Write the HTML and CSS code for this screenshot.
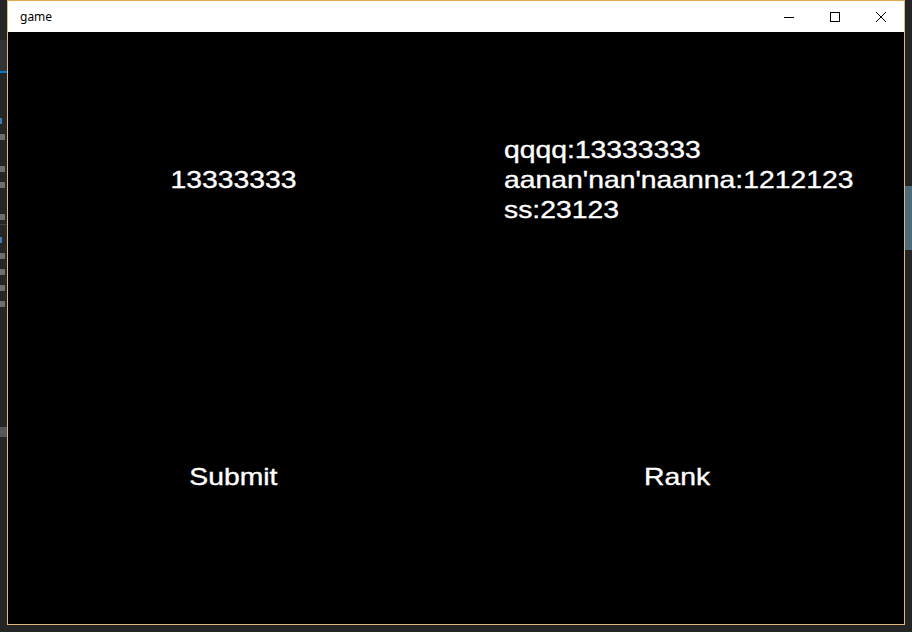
FILE: index.html
```html
<!DOCTYPE html>
<html>
<head>
<meta charset="utf-8">
<title>game</title>
<link rel="stylesheet" href="styles.css">
</head>
<body>
<div class="desktop">
  <div class="ide-left">
    <div class="tab"></div>
    <div class="mark blue"></div>
    <div class="mark grey gap"></div>
    <div class="mark grey"></div>
    <div class="mark grey gap"></div>
    <div class="mark grey"></div>
    <div class="rule"></div>
    <div class="mark blue"></div>
    <div class="mark grey"></div>
    <div class="mark grey"></div>
    <div class="mark grey"></div>
    <div class="mark grey"></div>
    <div class="sel"></div>
  </div>
  <div class="ide-right">
    <div class="panel"></div>
  </div>
  <div class="window">
    <div class="titlebar">
      <span class="title">game</span>
      <div class="controls">
        <div class="ctl">
          <svg width="10" height="10" viewBox="0 0 10 10"><path d="M0 5.5h10" stroke="#000" stroke-width="1"/></svg>
        </div>
        <div class="ctl">
          <svg width="10" height="10" viewBox="0 0 10 10"><rect x="0.5" y="0.5" width="9" height="9" fill="none" stroke="#000" stroke-width="1"/></svg>
        </div>
        <div class="ctl">
          <svg width="10" height="10" viewBox="0 0 10 10"><path d="M0 0L10 10M10 0L0 10" stroke="#000" stroke-width="1"/></svg>
        </div>
      </div>
    </div>
    <div class="content">
      <div class="cell score-cell"><span class="big">13333333</span></div>
      <div class="cell rank-cell">
        <div class="rank-list">
          <div class="big">qqqq:13333333</div>
          <div class="big">aanan'nan'naanna:1212123</div>
          <div class="big">ss:23123</div>
        </div>
      </div>
      <div class="cell btn-cell left-btn"><span class="big">Submit</span></div>
      <div class="cell btn-cell right-btn"><span class="big">Rank</span></div>
    </div>
  </div>
</div>
</body>
</html>
```

FILE: styles.css
```css
html, body {
  margin: 0;
  padding: 0;
}
body {
  width: 912px;
  height: 632px;
  overflow: hidden;
  background: #252526;
  font-family: "Liberation Sans", Arial, sans-serif;
}
.desktop {
  position: relative;
  width: 912px;
  height: 632px;
  overflow: hidden;
  background: #252526;
}
.ide-left {
  position: absolute;
  left: 0;
  top: 40px;
  width: 7px;
  display: flex;
  flex-direction: column;
}
.ide-left .tab {
  height: 31px;
  background: #333337;
  border-bottom: 2px solid #007acc;
  margin-bottom: 45px;
}
.ide-left .mark {
  height: 6px;
  margin-bottom: 10px;
}
.ide-left .gap {
  margin-bottom: 26px;
}
.ide-left .blue { background: #3d79b4; width: 2px; }
.ide-left .grey { background: #6e6e6e; width: 5px; }
.ide-left .rule {
  height: 1px;
  background: #3f3f46;
  margin: -6px 0 12px;
}
.ide-left .sel {
  margin-top: 110px;
  height: 10px;
  background: #55555a;
}
.ide-right {
  position: absolute;
  left: 905px;
  top: 186px;
  width: 7px;
}
.ide-right .panel {
  height: 64px;
  background: #4e6b7c;
}
.window {
  position: absolute;
  left: 7px;
  top: 0;
  width: 896px;
  height: 623px;
  border: 1px solid #e0b77c;
  border-top-color: #e3a84f;
  display: flex;
  flex-direction: column;
  background: #000;
}
.titlebar {
  height: 31px;
  flex: none;
  background: #fff;
  display: flex;
  align-items: center;
  justify-content: space-between;
}
.title {
  font-family: "Noto Sans", "Open Sans", sans-serif;
  font-size: 12px;
  color: #000;
  padding-left: 12px;
  margin-top: -1px;
}
.controls {
  display: flex;
  height: 31px;
}
.ctl {
  width: 46px;
  height: 31px;
  display: flex;
  align-items: center;
  justify-content: center;
}
.ctl svg {
  display: block;
  shape-rendering: crispEdges;
}
.content {
  flex: 1;
  background: #000;
  display: grid;
  grid-template-columns: 448px 448px;
  grid-template-rows: 430px auto;
  color: #fff;
  overflow: hidden;
}
.big {
  font-size: 24px;
  line-height: 30px;
  display: inline-block;
  white-space: pre;
  transform: scaleX(1.18);
  -webkit-text-stroke: 0.35px #fff;
}
.score-cell {
  padding-top: 133px;
  padding-left: 2px;
  text-align: center;
}
.rank-cell {
  padding-top: 103px;
  padding-left: 48px;
}
.rank-list .big {
  display: block;
  transform-origin: left center;
}
.btn-cell {
  text-align: center;
}
.left-btn {
  padding-left: 2px;
}
.right-btn {
  padding-right: 5px;
}
```
